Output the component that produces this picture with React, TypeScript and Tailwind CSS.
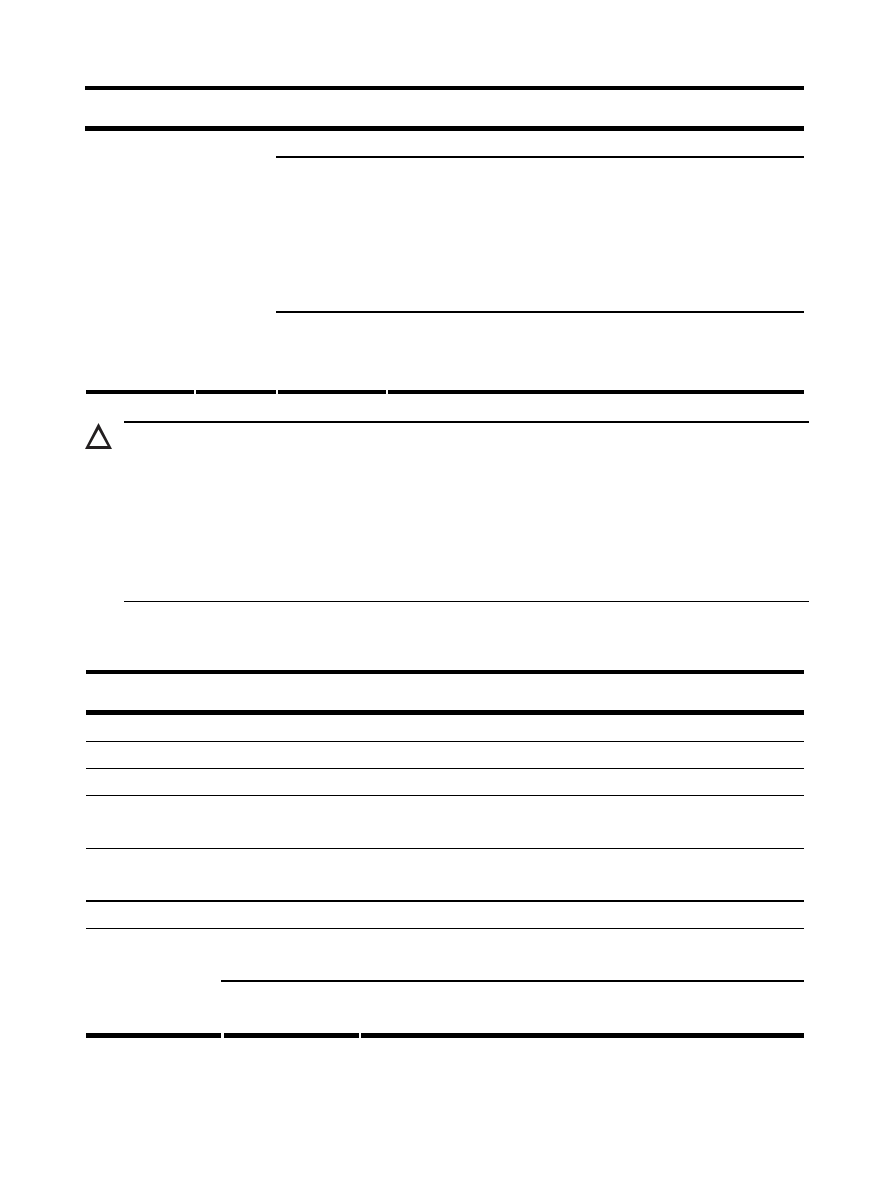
import React from "react";

function Rule({ h, className = "" }: { h: string; className?: string }) {
  return <div className={`bg-black ${h} ${className}`} />;
}

export default function App() {
  return (
    <div className="min-h-[1191px] w-[894px] bg-white pt-[86px] pl-[86px] pr-[90px] font-['Liberation_Sans',sans-serif]">
      <Rule h="h-[4px]" className="-ml-[1px]" />
      <Rule h="h-[5px]" className="mt-[36px] -ml-[1px]" />
      <Rule h="h-[2px]" className="mt-[25px] ml-[190px]" />
      <Rule h="h-[2px]" className="mt-[153px] ml-[190px]" />
      <div className="mt-[77px] flex gap-[2px]">
        <div className="h-[4px] w-[108px] bg-black" />
        <div className="h-[4px] w-[80px] bg-black" />
        <div className="h-[4px] w-[108px] bg-black" />
        <div className="h-[4px] flex-1 bg-black" />
      </div>
      <div className="mt-[27px] -mr-[5px] flex">
        <svg
          width="27"
          height="26"
          viewBox="0 0 27 26"
          className="-ml-[1px] mt-[2px] shrink-0"
        >
          <path
            d="M13.5 0 L27 26 L0 26 Z M13.5 6.5 L22.6 23 L4.4 23 Z"
            fill="#231f20"
            fillRule="evenodd"
          />
        </svg>
        <div className="ml-[12px] flex flex-1 flex-col">
          <div className="h-[2px] bg-black" />
          <div className="mt-[178px] h-[1px] bg-black" />
        </div>
      </div>
      <Rule h="h-[4px]" className="mt-[68px]" />
      <Rule h="h-[5px]" className="mt-[36px]" />
      <Rule h="h-[1px]" className="mt-[26px]" />
      <Rule h="h-[1px]" className="mt-[26px]" />
      <Rule h="h-[1px]" className="mt-[26px]" />
      <Rule h="h-[1px]" className="mt-[52px]" />
      <Rule h="h-[2px]" className="mt-[51px]" />
      <Rule h="h-[1px]" className="mt-[26px]" />
      <Rule h="h-[2px]" className="mt-[51px] ml-[135px]" />
      <div className="mt-[51px] flex">
        <div className="h-[5px] w-[135px] bg-black" />
        <div className="ml-[3px] h-[5px] w-[135px] bg-black" />
        <div className="ml-[2px] h-[5px] flex-1 bg-black" />
      </div>
    </div>
  );
}
